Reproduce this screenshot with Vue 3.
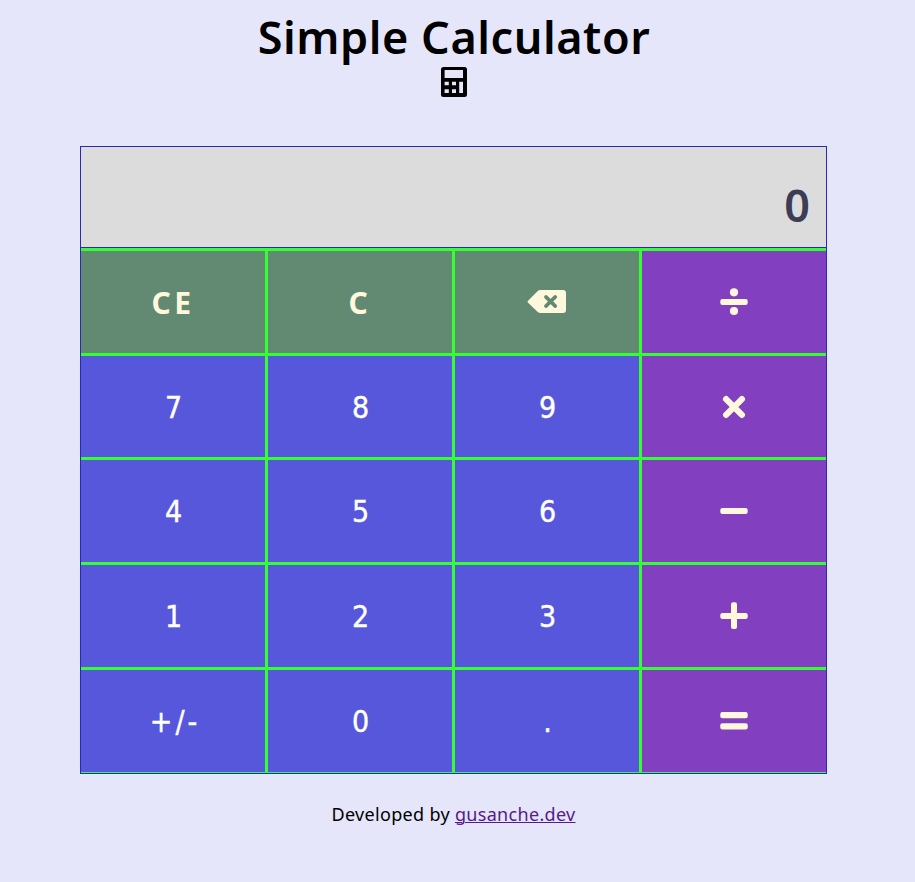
<script setup>
import { ref } from 'vue'

const display = ref('0')
const keys = [
  { label: 'CE', kind: 'edit' },
  { label: 'C', kind: 'edit' },
  { icon: 'back', label: 'Backspace', kind: 'edit' },
  { icon: 'divide', label: 'Divide', kind: 'op' },
  { label: '7', kind: 'num' },
  { label: '8', kind: 'num' },
  { label: '9', kind: 'num' },
  { icon: 'times', label: 'Multiply', kind: 'op' },
  { label: '4', kind: 'num' },
  { label: '5', kind: 'num' },
  { label: '6', kind: 'num' },
  { icon: 'minus', label: 'Subtract', kind: 'op' },
  { label: '1', kind: 'num' },
  { label: '2', kind: 'num' },
  { label: '3', kind: 'num' },
  { icon: 'plus', label: 'Add', kind: 'op' },
  { label: '+/-', kind: 'num sign' },
  { label: '0', kind: 'num' },
  { label: '.', kind: 'num' },
  { icon: 'equals', label: 'Equals', kind: 'op' },
]
</script>

<template>
  <main class="page">
    <header class="header">
      <h1 class="title">Simple Calculator</h1>
      <svg class="logo" width="26" height="30" viewBox="0 0 26 30">
        <path fill-rule="evenodd" d="M2.5 0H23.5Q26 0 26 2.5V27.5Q26 30 23.5 30H2.5Q0 30 0 27.5V2.5Q0 0 2.5 0ZM3.6 3V11H22V3ZM3.6 14.8V18.3H7.8V14.8ZM11 14.8V18.3H15V14.8ZM3.6 22.3V26H7.8V22.3ZM11 22.3V26H15V22.3ZM18.2 14.8V26H22V14.8Z" />
      </svg>
    </header>

    <section class="calculator">
      <div class="display"><span class="value">{{ display }}</span></div>
      <div class="keypad">
        <button v-for="key in keys" :key="key.label" :class="['key', key.kind]" :aria-label="key.label">
          <svg v-if="key.icon === 'back'" class="icon" width="40" height="30" viewBox="0 0 40 30">
            <path fill-rule="evenodd" d="M.8 14.1L10.5 4.2Q11.7 3 13.2 3H36Q39 3 39 6V23Q39 26 36 26H13.2Q11.7 26 10.5 24.8L.8 15.4Q.2 14.7 .8 14.1Z" />
            <path class="back-cross" d="M18.9 9.9L28.3 19.1M28.3 9.9L18.9 19.1" />
          </svg>
          <svg v-else-if="key.icon" class="icon" width="28" height="32" viewBox="0 0 28 32">
            <template v-if="key.icon === 'divide'">
              <circle cx="14" cy="6.3" r="4.1" />
              <circle cx="14" cy="25" r="4.1" />
              <rect x=".3" y="13" width="27.4" height="6" rx="2" />
            </template>
            <path v-else-if="key.icon === 'times'" class="cross" d="M6.1 8.1L21.9 23.9M21.9 8.1L6.1 23.9" />
            <rect v-else-if="key.icon === 'minus'" x=".3" y="13" width="27.4" height="6" rx="2" />
            <template v-else-if="key.icon === 'plus'">
              <rect x=".3" y="13" width="27.4" height="6" rx="2" />
              <rect x="11" y="2.3" width="6" height="26.7" rx="2" />
            </template>
            <template v-else>
              <rect x=".3" y="7" width="27.4" height="6.2" rx="2" />
              <rect x=".3" y="18.3" width="27.4" height="6.2" rx="2" />
            </template>
          </svg>
          <span v-else class="label">{{ key.label }}</span>
        </button>
      </div>
    </section>

    <footer class="footer">Developed by <a class="link" href="#">gusanche.dev</a></footer>
  </main>
</template>

<style>
body {
  background: #e6e6fa;
}
</style>

<style scoped>
.page {
  box-sizing: border-box;
  width: 907px;
  height: 882px;
  display: flex;
  flex-direction: column;
  align-items: center;
  font-family: "Noto Sans", "Open Sans", sans-serif;
  color: #000;
}
.header {
  box-sizing: border-box;
  width: 100%;
  height: 146px;
  padding-left: 1px;
  display: flex;
  flex-direction: column;
  align-items: center;
}
.title {
  margin: 7px 0 0;
  height: 60px;
  font-size: 45px;
  line-height: 60px;
  font-weight: 600;
  letter-spacing: 0.55px;
  white-space: nowrap;
}
.logo {
  display: block;
}
.calculator {
  box-sizing: border-box;
  width: 747px;
  border: 1px solid #2929b8;
}
.display {
  box-sizing: border-box;
  height: 101px;
  padding: 27px 16px 0;
  background: #dcdcdc;
  border-bottom: 1px solid #2929b8;
  text-align: right;
}
.value {
  display: block;
  font-size: 45px;
  line-height: 62px;
  font-weight: 600;
  color: #3c3c55;
}
.keypad {
  display: grid;
  grid-template-columns: repeat(4, 184px);
  grid-template-rows: 102px 101px repeat(3, 102px);
  gap: 3px;
  padding: 3px 0 1px;
  background: #33ff33;
}
.key {
  display: flex;
  align-items: center;
  justify-content: center;
  margin: 0;
  padding: 0;
  border: 0;
  border-radius: 0;
  font-size: 30px;
  line-height: 40px;
}
.num {
  padding: 2px 0 0 2px;
  background: #5757db;
  color: #fff;
  font-family: "DejaVu Sans Condensed", "DejaVu Sans", sans-serif;
  letter-spacing: 1px;
  -webkit-text-stroke: 0.4px currentColor;
}
.sign {
  padding-left: 4px;
  letter-spacing: 3px;
}
.edit {
  background: #628a73;
  color: #fff8dc;
  font-family: "Noto Sans", sans-serif;
  font-weight: 700;
  letter-spacing: 3.5px;
}
.edit .label {
  padding-top: 1px;
}
.op {
  background: #823fbf;
  color: #fff8dc;
}
.icon {
  display: block;
  fill: currentColor;
}
.cross {
  stroke: currentColor;
  stroke-width: 6.2;
  stroke-linecap: round;
}
.back-cross {
  stroke: #628a73;
  stroke-width: 3.6;
  stroke-linecap: round;
}
.footer {
  margin-top: 27px;
  font-size: 18px;
  line-height: 26px;
  letter-spacing: 0.32px;
  white-space: nowrap;
}
.link {
  color: #551a8b;
  text-decoration: underline;
  text-decoration-thickness: 1px;
}
</style>
